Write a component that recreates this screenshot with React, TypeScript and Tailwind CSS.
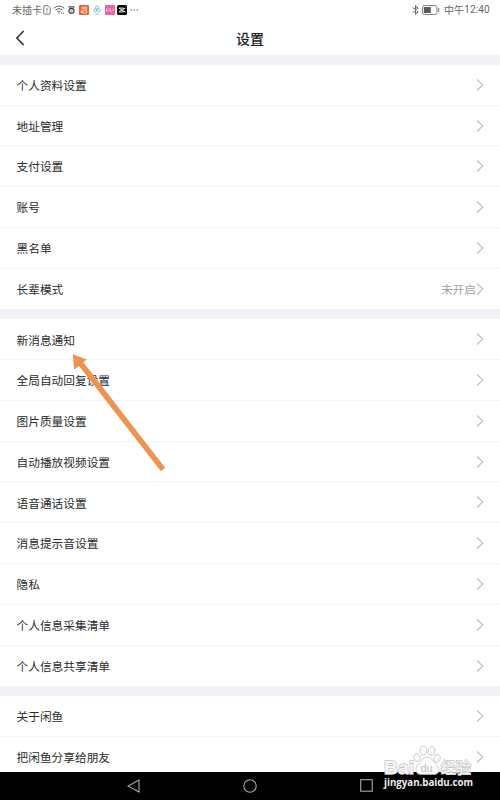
import React from 'react';

type Item = { label: string; value?: string };

const groups: Item[][] = [
  [
    { label: '个人资料设置' },
    { label: '地址管理' },
    { label: '支付设置' },
    { label: '账号' },
    { label: '黑名单' },
    { label: '长辈模式', value: '未开启' },
  ],
  [
    { label: '新消息通知' },
    { label: '全局自动回复设置' },
    { label: '图片质量设置' },
    { label: '自动播放视频设置' },
    { label: '语音通话设置' },
    { label: '消息提示音设置' },
    { label: '隐私' },
    { label: '个人信息采集清单' },
    { label: '个人信息共享清单' },
  ],
  [{ label: '关于闲鱼' }, { label: '把闲鱼分享给朋友' }],
];

export default function App() {
  return (
    <div className="relative flex h-[800px] w-[500px] flex-col overflow-hidden bg-white font-['Noto_Sans_CJK_SC','Noto_Sans',sans-serif] text-[#2b2b2b]">
      <StatusBar />
      <header className="grid h-[34.8px] shrink-0 grid-cols-[1fr_auto_1fr] items-center">
        <svg className="ml-[15px] mt-[2px] h-4 w-[10px]" viewBox="0 0 10 16" fill="none" stroke="#2a2a2a" strokeWidth="1.5">
          <path d="M8.7 1 1.8 8l6.9 7" />
        </svg>
        <h1 className="mt-[2px] text-[14px] leading-5 font-medium text-[#222]">设置</h1>
      </header>

      <main className="min-h-0 flex-1 overflow-hidden">
        {groups.map((items, i) => (
          <section key={i} className="border-t-[10px] border-[#f2f3f7]">
            {items.map((item, j) => (
              <Row key={item.label} item={item} last={j === items.length - 1} />
            ))}
          </section>
        ))}
      </main>

      <NavBar />

      {/* Pointer to the notification row */}
      <svg className="absolute left-[70px] top-[350px] h-[125px] w-[100px]" viewBox="70 350 100 125" fill="#ed9550">
        <path d="M72.8 354.2 86.8 359.6 83.4 362.2 165.2 467.8 160.9 471.3 79 366 74.1 369.4Z" />
      </svg>

      <Watermark />
    </div>
  );
}

function Row({ item, last }: { item: Item; last: boolean }) {
  return (
    <div className="relative flex h-[40.77px] items-center pr-[16px] pb-[.8px] pl-[16.5px]">
      <span className="text-[11.7px] leading-none">{item.label}</span>
      {item.value && <span className="ml-auto text-[11.7px] leading-none text-[#a3a3a3]">{item.value}</span>}
      <svg className={item.value ? 'h-3 w-2' : 'ml-auto h-3 w-2'} viewBox="0 0 8 12" fill="none" stroke="#bdbdbd" strokeWidth="1.1">
        <path d="M1 .5 6.8 6 1 11.5" />
      </svg>
      {!last && <i className="absolute inset-x-0 bottom-0 h-px bg-[#f6f6f6]" />}
    </div>
  );
}

function StatusBar() {
  return (
    <div className="flex h-5 shrink-0 items-center pr-[10px] pl-[12px] text-[10px] leading-none text-[#666]">
      <span>未插卡</span>
      <svg className="ml-px h-[10px] w-[8px]" viewBox="0 0 8 10" fill="none" stroke="#666" strokeWidth=".9">
        <path d="M.8 1.3Q.8.7 1.4.7H5l2.2 2.2v5.6q0 .7-.7.7h-5q-.7 0-.7-.7ZM4 3v2.9M4 6.8v1" />
      </svg>
      <svg className="ml-[2px] h-[10px] w-[12px]" viewBox="0 0 12 10" fill="none" stroke="#666" strokeWidth="1">
        <path d="M.8 3.2Q6-1 11.2 3.2M2.4 5Q6 2 9.6 5M4 6.8q2-1.5 3.7 0" />
        <path d="M5.3 8.2h1.3M8 8.2h1M10 8.2h1" />
      </svg>
      <svg className="ml-[3px] h-[8px] w-[7px]" viewBox="0 0 8 9" fill="none" stroke="#282c38">
        <path d="M.5 1h7" strokeWidth="1.3" />
        <rect x="1.1" y="3" width="5.8" height="5" rx="2" strokeWidth="1.3" />
        <path d="M3 5 4 6l1-1" />
      </svg>
      <svg className="ml-[4px] h-[10px] w-[10px]" viewBox="0 0 10 10" fill="none">
        <rect width="10" height="10" rx="1" fill="#e8602b" />
        <circle cx="3.7" cy="3" r="1" stroke="#fff" strokeWidth=".7" />
        <circle cx="6.6" cy="3" r="1.2" stroke="#fff" strokeWidth=".7" />
        <path d="M4 5.3h3.7v2.8H4ZM4 6.6 2.2 5.7v2.1Z" stroke="#fff" strokeWidth=".7" />
      </svg>
      <svg className="ml-[4px] h-[10px] w-[8px]" viewBox="0 0 8 10" fill="none" stroke="#79b7d8" strokeWidth=".9">
        <circle cx="4" cy="2.7" r="1.5" />
        <circle cx="2.1" cy="5.4" r="1.5" />
        <circle cx="5.9" cy="5.4" r="1.5" />
        <path d="M2.2 9.2h3.6" />
      </svg>
      <svg className="ml-[4px] h-[10px] w-[10px]" viewBox="0 0 10 10" fill="none">
        <rect width="10" height="10" rx="1" fill="#f0609a" />
        <path d="M1.5 3.3v2.9h1.3M3.8 4.5v1.7M5.2 3.3v2.9h1.4M7.9 4.5v1.7M3.8 3.2v.5M7.9 3.2v.5" stroke="#fff" strokeWidth=".7" />
      </svg>
      <svg className="ml-[2px] h-[10px] w-[10px]" viewBox="0 0 10 10" fill="none">
        <rect width="10" height="10" rx="1.5" fill="#080808" />
        <path d="M8.3 3 5 5l3.3 2M6.7 4V3.1H2L5 5 2 6.9h4.7V6" stroke="#fff" strokeWidth=".9" />
      </svg>
      <svg className="ml-[3px] h-[2px] w-[9px]" viewBox="0 0 9 2" fill="#777">
        <circle cx="1.2" cy="1" r=".8" />
        <circle cx="4.3" cy="1" r=".8" />
        <circle cx="7.4" cy="1" r=".8" />
      </svg>

      <svg className="ml-auto h-[10px] w-[7px]" viewBox="0 0 6 10" preserveAspectRatio="none" fill="none" stroke="#666" strokeWidth=".9">
        <path d="m.6 2.5 4.5 4.2L3 9V1l2.1 2.3L.6 7.5" />
      </svg>
      <svg className="ml-[3px] h-[10px] w-[18px]" viewBox="0 0 18 10" fill="none">
        <rect x=".5" y=".5" width="14.5" height="9" rx="2" stroke="#777" strokeWidth=".9" />
        <rect x="1.8" y="2" width="7" height="6" rx=".5" fill="#5b5b5b" />
        <path d="M16.7 3v4" stroke="#777" />
      </svg>
      <span className="ml-[4px] flex w-[46px] items-center tracking-[.1px] whitespace-nowrap">
        中午<span className="font-[Roboto] text-[10px]">12:40</span>
      </span>
    </div>
  );
}

function NavBar() {
  return (
    <nav className="flex h-[28.5px] shrink-0 items-center justify-between bg-black pr-[127px] pl-[127px]">
      <svg className="h-[14px] w-[13px]" viewBox="0 0 13 14" fill="none" stroke="#aaa" strokeWidth="1.1">
        <path d="M12 1 1 7l11 6Z" />
      </svg>
      <svg className="h-[14px] w-[14px]" viewBox="0 0 14 14" fill="none" stroke="#aaa" strokeWidth="1.1">
        <circle cx="7" cy="7" r="6.2" />
      </svg>
      <svg className="h-[13px] w-[13px]" viewBox="0 0 13 13" fill="none" stroke="#aaa" strokeWidth="1.1">
        <rect x=".7" y=".7" width="11.5" height="11.5" />
      </svg>
    </nav>
  );
}

function Watermark() {
  return (
    <svg className="absolute left-[380px] top-[744px] h-[50px] w-[100px]" viewBox="380 744 100 50">
      <g fill="#fcfcfc" stroke="#c8c8c8" strokeWidth=".9">
        <ellipse cx="417" cy="757.5" rx="3.1" ry="4" transform="rotate(-15 417 757.5)" />
        <ellipse cx="423.5" cy="750.5" rx="3.3" ry="4.4" />
        <ellipse cx="431.5" cy="751" rx="3.3" ry="4.4" transform="rotate(12 431.5 751)" />
        <ellipse cx="437" cy="758.5" rx="3.1" ry="4" transform="rotate(15 437 758.5)" />
        <path d="M427 757.2c-4 0-5 4-8.500 6.700-3.600 3-3.500 10 1.500 10.400 4.500.3 9.500-.3 14 0 5 .6 6.500-5.400 3-9.200-3.400-3-5.200-7.900-10-7.900Z" />
      </g>
      <g stroke="#c8c8c8" strokeWidth="1.4" fill="#f6f6f6" style={{ paintOrder: 'stroke' }}>
        <text x="384" y="773.5" className="font-['Liberation_Sans',sans-serif] text-[19px] font-bold" textLength="30" lengthAdjust="spacingAndGlyphs">Bai</text>
        <text x="441" y="773" className="text-[15px] font-medium" textLength="30">经验</text>
      </g>
      <text x="420.500" y="772" fill="#bdbdbd" className="font-['Liberation_Sans',sans-serif] text-[11px]">du</text>
      <text x="384" y="786" fill="#eee" className="font-['Open_Sans',sans-serif] text-[10px] leading-none font-bold" textLength="89" lengthAdjust="spacingAndGlyphs">jingyan.baidu.com</text>
    </svg>
  );
}
